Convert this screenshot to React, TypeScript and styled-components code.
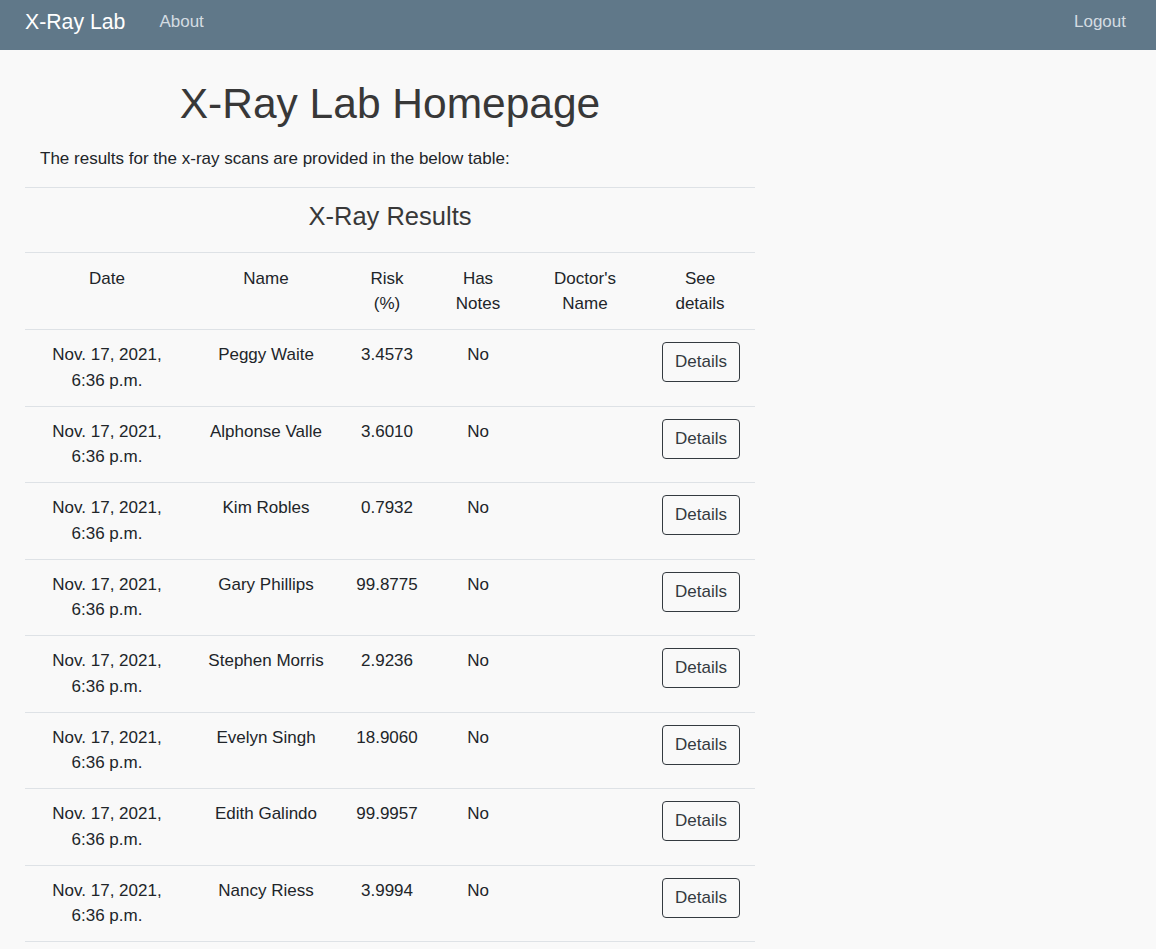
import React from "react";
import styled, { createGlobalStyle } from "styled-components";

const GlobalStyle = createGlobalStyle`
  body {
    margin: 0;
    background-color: #f9f9f9;
    font-family: "Liberation Sans", Arial, sans-serif;
    font-size: 17px;
    color: #212529;
  }
`;

const Navbar = styled.nav`
  height: 50px;
  background-color: #607889;
  display: flex;
  align-items: center;
  padding: 0 30px 6px 25px;
  box-sizing: border-box;
`;

const Brand = styled.a`
  color: #ffffff;
  font-size: 21.25px;
  margin-right: 34px;
`;

const NavLink = styled.a<{ $right?: boolean }>`
  color: #d4dce2;
  font-size: 17px;
  margin-left: ${(p) => (p.$right ? "auto" : "0")};
`;

const Main = styled.main`
  width: 730px;
  padding: 0 25px;
`;

const Title = styled.h1`
  margin: 28px 0 17px;
  font-size: 42.5px;
  font-weight: 400;
  line-height: 1.2;
  text-align: center;
  color: #383838;
`;

const Intro = styled.p`
  margin: 0 0 15px;
  padding-left: 15px;
  line-height: 25.5px;
`;

const ResultsTitle = styled.div`
  border-top: 1px solid #dee2e6;
  border-bottom: 1px solid #dee2e6;
  height: 66px;
  padding-bottom: 7px;
  box-sizing: border-box;
  display: flex;
  align-items: center;
  justify-content: center;
  font-size: 25.5px;
  color: #383838;
`;

const Table = styled.table`
  width: 100%;
  border-collapse: collapse;
  table-layout: fixed;
`;

const HeadCell = styled.th`
  font-weight: 400;
  text-align: center;
  vertical-align: top;
  line-height: 25.5px;
  padding: 13px 13px 12.5px;
  border-bottom: 1px solid #dee2e6;
`;

const Cell = styled.td`
  text-align: center;
  vertical-align: top;
  line-height: 25.5px;
  padding: 12px 8px 12.5px;
  border-bottom: 1px solid #dee2e6;
`;

const ButtonCell = styled(Cell)`
  padding-left: 9px;
  padding-right: 7px;
`;

const DetailsButton = styled.button`
  font-family: inherit;
  font-size: 17px;
  line-height: 25.5px;
  color: #343a40;
  background: transparent;
  border: 1px solid #343a40;
  border-radius: 4px;
  padding: 6.375px 12.5px;
  cursor: pointer;
`;

const columns = [
  { label: "Date", width: 164 },
  { label: "Name", width: 154 },
  { label: "Risk (%)", width: 88 },
  { label: "Has Notes", width: 94 },
  { label: "Doctor's Name", width: 120 },
  { label: "See details", width: 110 },
];

const results = [
  { name: "Peggy Waite", risk: "3.4573" },
  { name: "Alphonse Valle", risk: "3.6010" },
  { name: "Kim Robles", risk: "0.7932" },
  { name: "Gary Phillips", risk: "99.8775" },
  { name: "Stephen Morris", risk: "2.9236" },
  { name: "Evelyn Singh", risk: "18.9060" },
  { name: "Edith Galindo", risk: "99.9957" },
  { name: "Nancy Riess", risk: "3.9994" },
];

export default function App() {
  return (
    <>
      <GlobalStyle />
      <Navbar>
        <Brand>X-Ray Lab</Brand>
        <NavLink>About</NavLink>
        <NavLink $right>Logout</NavLink>
      </Navbar>
      <Main>
        <Title>X-Ray Lab Homepage</Title>
        <Intro>The results for the x-ray scans are provided in the below table:</Intro>
        <ResultsTitle>X-Ray Results</ResultsTitle>
        <Table>
          <colgroup>
            {columns.map((c) => (
              <col key={c.label} style={{ width: c.width }} />
            ))}
          </colgroup>
          <thead>
            <tr>
              {columns.map((c) => (
                <HeadCell key={c.label}>{c.label}</HeadCell>
              ))}
            </tr>
          </thead>
          <tbody>
            {results.map((r) => (
              <tr key={r.name}>
                <Cell>
                  Nov. 17, 2021,
                  <br />
                  6:36 p.m.
                </Cell>
                <Cell>{r.name}</Cell>
                <Cell>{r.risk}</Cell>
                <Cell>No</Cell>
                <Cell></Cell>
                <ButtonCell>
                  <DetailsButton>Details</DetailsButton>
                </ButtonCell>
              </tr>
            ))}
          </tbody>
        </Table>
      </Main>
    </>
  );
}
